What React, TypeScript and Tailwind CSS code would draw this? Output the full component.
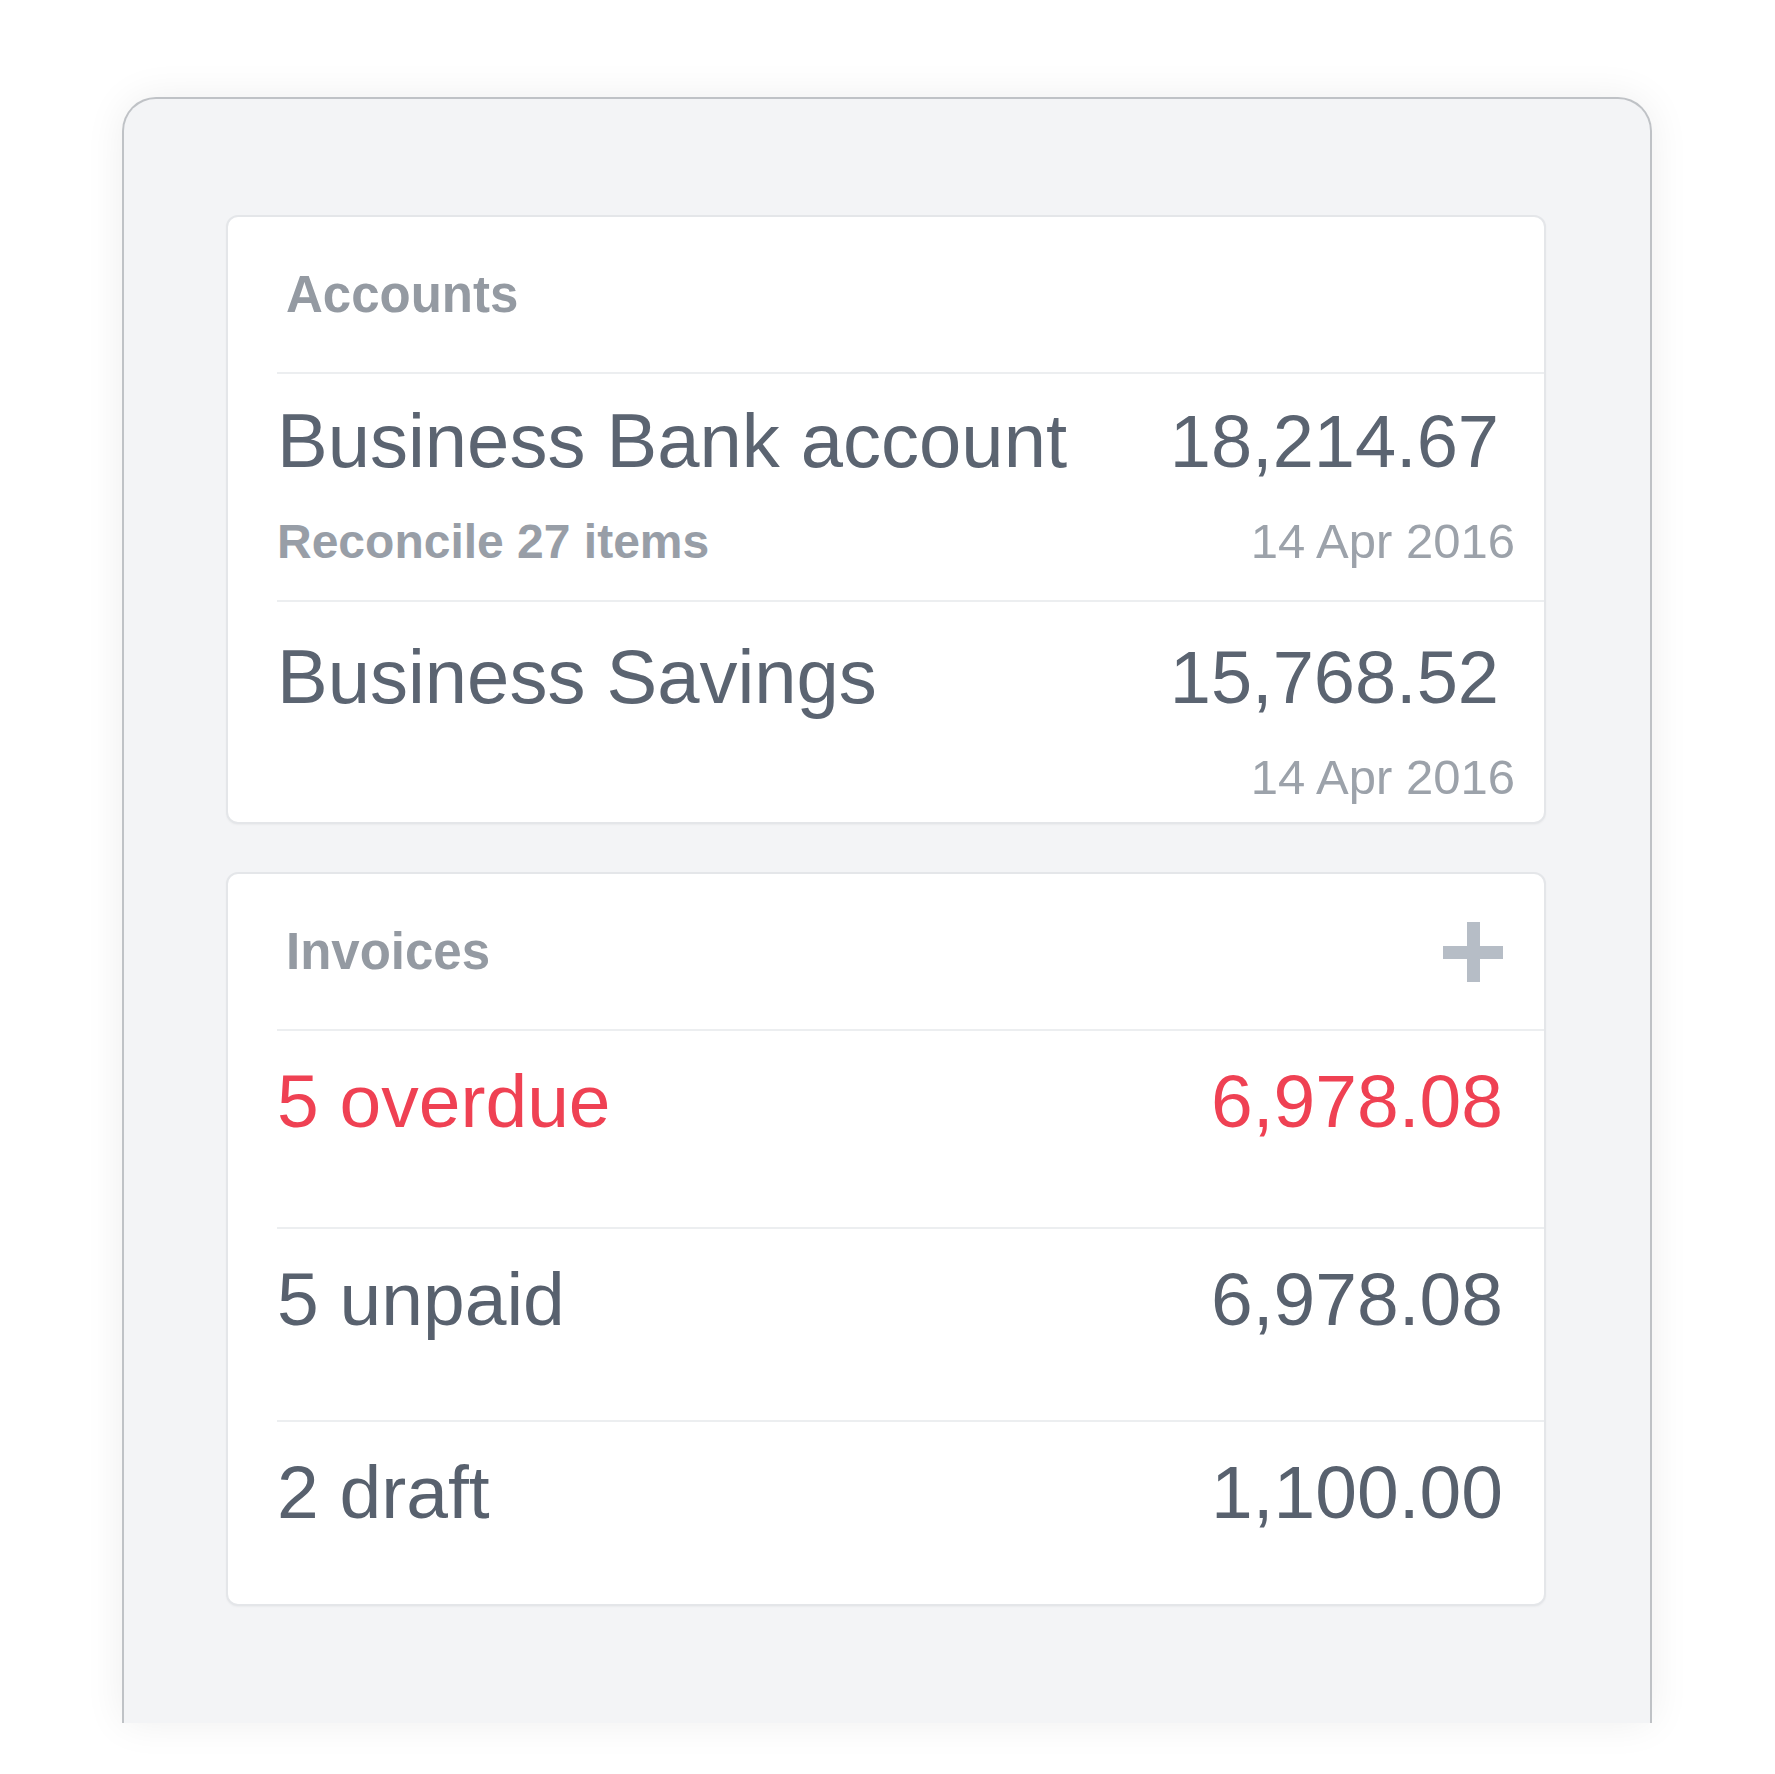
import React from 'react';

interface AccountRowProps {
  name: string;
  amount: string;
  date: string;
  note?: string;
  className: string;
}

function AccountRow({ name, amount, date, note, className }: AccountRowProps) {
  return (
    <div className={`border-t-2 border-[#eceef0] ${className}`}>
      <div className="flex items-baseline justify-between pr-[45px] leading-none text-[#5b6471]">
        <span className="text-[76px]">{name}</span>
        <span className="text-[74px]">{amount}</span>
      </div>
      <div className="mt-[38px] flex items-baseline justify-between pr-[29px] leading-none">
        <span className="text-[48px] font-semibold text-[#989ea7]">{note}</span>
        <span className="text-[49px] text-[#9ca2aa]">{date}</span>
      </div>
    </div>
  );
}

interface InvoiceRowProps {
  label: string;
  amount: string;
  overdue?: boolean;
  className: string;
}

function InvoiceRow({ label, amount, overdue, className }: InvoiceRowProps) {
  return (
    <div
      className={`flex items-start justify-between border-t-2 border-[#eceef0] pr-[41px] pt-[33px] text-[75px] leading-none ${
        overdue ? 'text-[#ef4153]' : 'text-[#58616e]'
      } ${className}`}
    >
      <span>{label}</span>
      <span>{amount}</span>
    </div>
  );
}

function CardHeader({ title, children }: { title: string; children?: React.ReactNode }) {
  return (
    <div className="flex h-[155px] items-start justify-between pl-[58px] pr-[41px] pt-[52px]">
      <h2 className="text-[51px] font-semibold leading-none text-[#949aa2]">{title}</h2>
      {children}
    </div>
  );
}

function PlusIcon() {
  return (
    <svg width="60" height="60" viewBox="0 0 60 60" className="-mt-[4px]">
      <rect x="24" y="0" width="13" height="60" fill="#b6bdc6" />
      <rect x="0" y="24" width="60" height="13" fill="#b6bdc6" />
    </svg>
  );
}

export default function App() {
  return (
    <div className="h-[1774px] w-full overflow-hidden bg-white font-['Liberation_Sans',Arial,Helvetica,sans-serif]">
      <div className="ml-[122px] mt-[97px] flex h-[1626px] w-[1530px] flex-col gap-[48px] rounded-t-[34px] border-2 border-b-0 border-[#bfc2c6] bg-[#f3f4f6] pl-[102px] pr-[104px] pt-[116px] shadow-[0_0_40px_rgba(0,0,0,0.07)]">
        {/* Accounts */}
        <div className="rounded-[12px] border-2 border-[#e4e6e9] bg-white shadow-[0_1px_2px_rgba(0,0,0,0.04)]">
          <CardHeader title="Accounts" />
          <div className="ml-[49px]">
            <AccountRow
              name="Business Bank account"
              amount="18,214.67"
              note="Reconcile 27 items"
              date="14 Apr 2016"
              className="pb-[34px] pt-[29px]"
            />
            <AccountRow
              name="Business Savings"
              amount="15,768.52"
              date="14 Apr 2016"
              className="pb-[20px] pt-[37px]"
            />
          </div>
        </div>

        {/* Invoices */}
        <div className="rounded-[12px] border-2 border-[#e4e6e9] bg-white shadow-[0_1px_2px_rgba(0,0,0,0.04)]">
          <CardHeader title="Invoices">
            <PlusIcon />
          </CardHeader>
          <div className="ml-[49px]">
            <InvoiceRow label="5 overdue" amount="6,978.08" overdue className="h-[198px]" />
            <InvoiceRow label="5 unpaid" amount="6,978.08" className="h-[193px]" />
            <InvoiceRow label="2 draft" amount="1,100.00" className="h-[184px]" />
          </div>
        </div>
      </div>
    </div>
  );
}
